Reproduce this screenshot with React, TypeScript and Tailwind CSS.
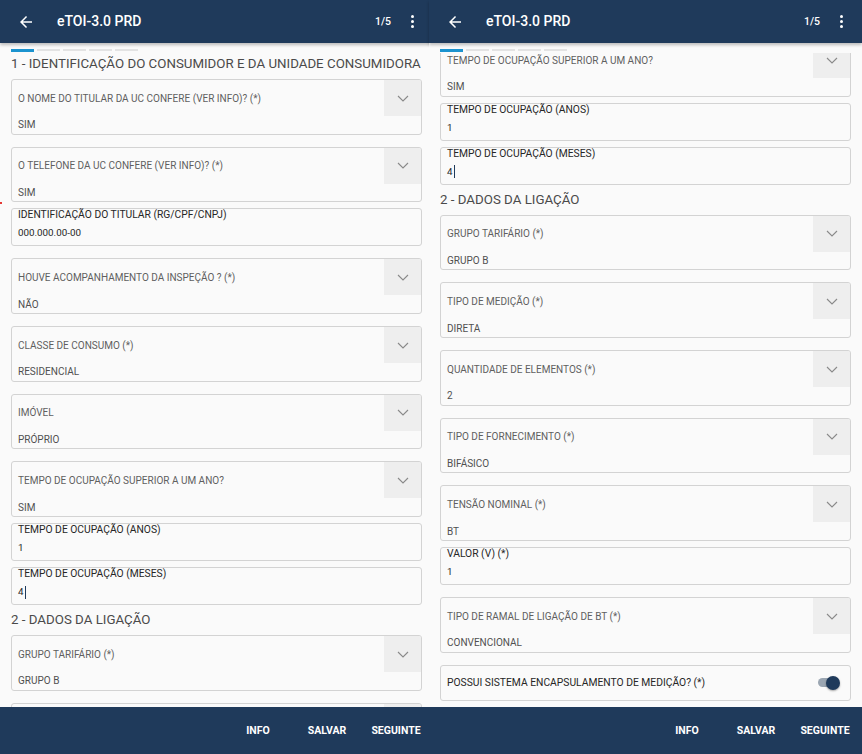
import React from "react";

type Item =
  | { kind: "title"; text: string; first?: boolean }
  | { kind: "select"; label: string; value: string; first?: boolean }
  | { kind: "text"; label: string; value: string; cursor?: boolean }
  | { kind: "toggle"; label: string };

const FONT = { fontFamily: "Roboto, 'Noto Sans', 'Liberation Sans', sans-serif" };

function Chevron() {
  return (
    <svg width="12" height="7" viewBox="0 0 12 7" fill="none">
      <path d="M1 1 L6 6 L11 1" stroke="#8a8a8a" strokeWidth="1.1" />
    </svg>
  );
}

function SelectCard({ label, value, mt }: { label: string; value: string; mt: string }) {
  return (
    <div className={`${mt} h-[55.7px] border border-[#d3d3d3] rounded-[3px] bg-[#fafafa] flex flex-col overflow-hidden`}>
      <div className="h-[36px] flex shrink-0">
        <div className="flex-1 flex items-center pl-[6px] text-[10px] font-normal text-[#5f5f5f]">{label}</div>
        <div className="w-[37px] bg-[#eeeeee] flex items-center justify-center">
          <Chevron />
        </div>
      </div>
      <div className="flex-1 flex items-center pl-[6px] text-[10px] font-normal text-[#505050]">{value}</div>
    </div>
  );
}

function TextCard({ label, value, cursor }: { label: string; value: string; cursor?: boolean }) {
  return (
    <div className="mt-[6px] h-[38px] border border-[#d3d3d3] rounded-[3px] bg-[#fafafa] pl-[6px]">
      <div className="leading-[12px] text-[10.3px] font-normal text-[#262626]">{label}</div>
      <div className="mt-[5px] leading-[14px] text-[9.8px] font-normal text-[#262626] flex items-center">
        <span>{value}</span>
        {cursor && <span className="inline-block w-[1.5px] h-[13px] bg-[#1f3a5b] ml-[1px]" />}
      </div>
    </div>
  );
}

function ToggleCard({ label }: { label: string }) {
  return (
    <div className="mt-[12px] h-[36px] border border-[#d3d3d3] rounded-[3px] bg-[#fafafa] flex items-center pl-[6px] pr-[10px]">
      <div className="flex-1 text-[10.3px] font-normal text-[#262626]">{label}</div>
      <div className="relative w-[22px] h-[14px] flex items-center">
        <div className="w-[18px] h-[9px] rounded-full bg-[#9ba6b2]" />
        <div className="absolute right-0 top-0 w-[14px] h-[14px] rounded-full bg-[#1f3a5b] shadow-[0_1px_2px_rgba(0,0,0,0.35)]" />
      </div>
    </div>
  );
}

function Title({ text, first }: { text: string; first?: boolean }) {
  return (
    <div
      className={`${first ? "pt-[1px]" : "pt-[5px]"} pb-[5px] leading-[20px] text-[13.3px] font-normal text-[#4a4a4a] whitespace-nowrap`}
    >
      {text}
    </div>
  );
}

function Screen({ items }: { items: Item[] }) {
  let prev: string | null = null;
  return (
    <div className="w-[433px] h-[754px] shrink-0 flex flex-col bg-[#fafafa]" style={FONT}>
      <div className="h-[43px] shrink-0 bg-[#1f3a5b] flex items-center text-white relative z-10 shadow-[0_2px_3px_rgba(0,0,0,0.25)]">
        <svg width="18" height="18" viewBox="0 0 24 24" className="ml-[17px]" fill="white">
          <path d="M20 11H7.83l5.59-5.59L12 4l-8 8 8 8 1.41-1.41L7.83 13H20v-2z" />
        </svg>
        <div className="ml-[22px] text-[14px] font-medium">eTOI-3.0 PRD</div>
        <div className="ml-auto text-[10.5px] font-medium">1/5</div>
        <div className="ml-[20px] mr-[19px] flex flex-col gap-[2px] items-center">
          <span className="block w-[3px] h-[3px] bg-white rounded-full" />
          <span className="block w-[3px] h-[3px] bg-white rounded-full" />
          <span className="block w-[3px] h-[3px] bg-white rounded-full" />
        </div>
      </div>
      <div className="h-[10px] shrink-0 px-[11px] pt-[6px] flex gap-[3px] items-start">
        <div className="w-[23px] h-[2.5px] bg-[#1b93cf]" />
        <div className="w-[23px] h-[2px] bg-[#e3e3e3]" />
        <div className="w-[23px] h-[2px] bg-[#e3e3e3]" />
        <div className="w-[23px] h-[2px] bg-[#e3e3e3]" />
        <div className="w-[23px] h-[2px] bg-[#e3e3e3]" />
      </div>
      <div className="flex-1 overflow-hidden pl-[11px] pr-[11px]">
        {items.map((it, i) => {
          let el: React.ReactNode = null;
          if (it.kind === "title") el = <Title key={i} text={it.text} first={it.first} />;
          else if (it.kind === "select") {
            const mt = it.first ? "mt-[-12px]" : prev === "title" ? "mt-0" : "mt-[12px]";
            el = <SelectCard key={i} label={it.label} value={it.value} mt={mt} />;
          } else if (it.kind === "text")
            el = <TextCard key={i} label={it.label} value={it.value} cursor={it.cursor} />;
          else el = <ToggleCard key={i} label={it.label} />;
          prev = it.kind;
          return el;
        })}
      </div>
      <div className="h-[47px] shrink-0 bg-[#1f3a5b] flex items-center justify-end pr-[5px] gap-[5px] text-white text-[10.5px] font-bold">
        <div className="min-w-[64px] text-center">INFO</div>
        <div className="min-w-[64px] text-center">SALVAR</div>
        <div className="min-w-[64px] text-center">SEGUINTE</div>
      </div>
    </div>
  );
}

const leftItems: Item[] = [
  { kind: "title", text: "1 - IDENTIFICAÇÃO DO CONSUMIDOR E DA UNIDADE CONSUMIDORA", first: true },
  { kind: "select", label: "O NOME DO TITULAR DA UC CONFERE (VER INFO)? (*)", value: "SIM" },
  { kind: "select", label: "O TELEFONE DA UC CONFERE (VER INFO)? (*)", value: "SIM" },
  { kind: "text", label: "IDENTIFICAÇÃO DO TITULAR (RG/CPF/CNPJ)", value: "000.000.00-00" },
  { kind: "select", label: "HOUVE ACOMPANHAMENTO DA INSPEÇÃO ? (*)", value: "NÃO" },
  { kind: "select", label: "CLASSE DE CONSUMO (*)", value: "RESIDENCIAL" },
  { kind: "select", label: "IMÓVEL", value: "PRÓPRIO" },
  { kind: "select", label: "TEMPO DE OCUPAÇÃO SUPERIOR A UM ANO?", value: "SIM" },
  { kind: "text", label: "TEMPO DE OCUPAÇÃO (ANOS)", value: "1" },
  { kind: "text", label: "TEMPO DE OCUPAÇÃO (MESES)", value: "4", cursor: true },
  { kind: "title", text: "2 - DADOS DA LIGAÇÃO" },
  { kind: "select", label: "GRUPO TARIFÁRIO (*)", value: "GRUPO B" },
  { kind: "select", label: "TIPO DE MEDIÇÃO (*)", value: "DIRETA" },
];

const rightItems: Item[] = [
  { kind: "select", label: "TEMPO DE OCUPAÇÃO SUPERIOR A UM ANO?", value: "SIM", first: true },
  { kind: "text", label: "TEMPO DE OCUPAÇÃO (ANOS)", value: "1" },
  { kind: "text", label: "TEMPO DE OCUPAÇÃO (MESES)", value: "4", cursor: true },
  { kind: "title", text: "2 - DADOS DA LIGAÇÃO" },
  { kind: "select", label: "GRUPO TARIFÁRIO (*)", value: "GRUPO B" },
  { kind: "select", label: "TIPO DE MEDIÇÃO (*)", value: "DIRETA" },
  { kind: "select", label: "QUANTIDADE DE ELEMENTOS (*)", value: "2" },
  { kind: "select", label: "TIPO DE FORNECIMENTO (*)", value: "BIFÁSICO" },
  { kind: "select", label: "TENSÃO NOMINAL (*)", value: "BT" },
  { kind: "text", label: "VALOR (V) (*)", value: "1" },
  { kind: "select", label: "TIPO DE RAMAL DE LIGAÇÃO DE BT (*)", value: "CONVENCIONAL" },
  { kind: "toggle", label: "POSSUI SISTEMA ENCAPSULAMENTO DE MEDIÇÃO? (*)" },
];

export default function App() {
  return (
    <div className="w-[862px] h-[754px] flex overflow-hidden bg-white relative">
      <div className="w-[429px] h-[754px] overflow-hidden shrink-0 relative">
        <Screen items={leftItems} />
        <span className="absolute left-0 top-[202px] w-[2px] h-[2px] bg-[#e53935]" />
      </div>
      <Screen items={rightItems} />
    </div>
  );
}
